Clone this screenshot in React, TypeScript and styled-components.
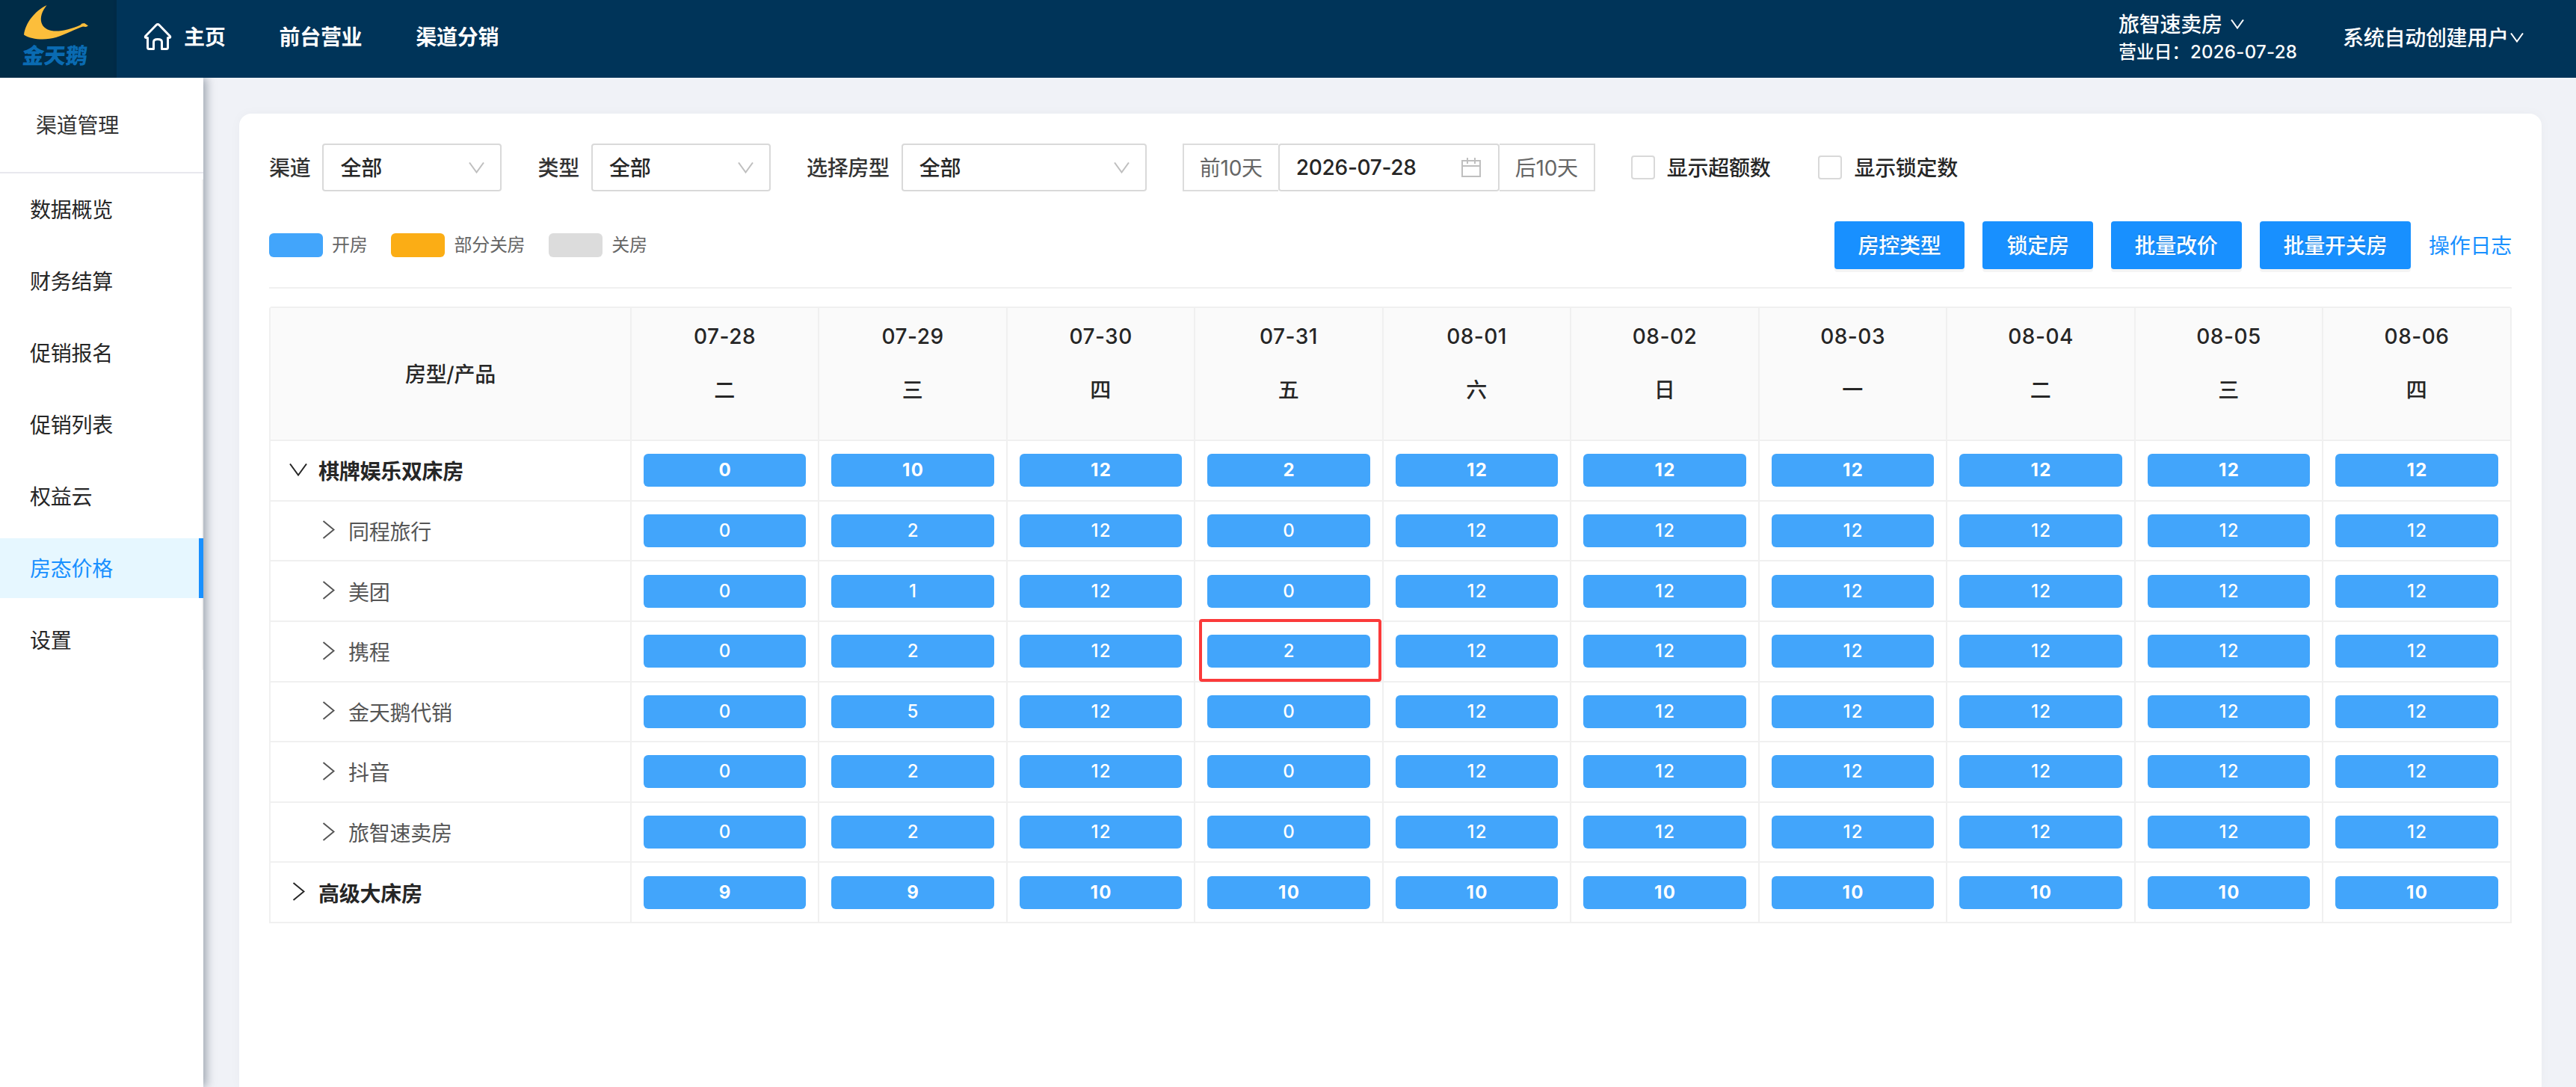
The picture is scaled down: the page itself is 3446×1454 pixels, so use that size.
import React from "react";
import styled, { createGlobalStyle, css } from "styled-components";

const GlobalStyle = createGlobalStyle`
  *, *::before, *::after { box-sizing: border-box; }
  html, body, #root { height: 100%; }
  body {
    margin: 0;
    overflow: hidden;
    background: #f0f2f7;
    color: #262626;
    font-family: Inter, "Noto Sans CJK SC", sans-serif;
    font-size: 28px;
    line-height: 44px;
    letter-spacing: -0.28px;
  }
`;

const Page = styled.div`
  display: flex;
  flex-direction: column;
  height: 1454px;
  overflow: hidden;
`;

const Label = styled.span`
  padding-top: 2px;
  white-space: nowrap;
`;

/* ---------- top bar ---------- */

const TopBar = styled.header`
  display: flex;
  flex: none;
  height: 104px;
  background: #003459;
  color: #fff;
`;

const Brand = styled.div`
  flex: none;
  width: 156px;
  height: 104px;
  background: #002c47;
  border-right: 4px solid #002a46;
  padding-top: 4px;
`;

const BrandMark = styled.svg`
  display: block;
  margin-left: 30px;
  width: 90px;
  height: 50px;
`;

const BrandName = styled.div`
  width: 90px;
  margin: 4px 0 0 30px;
  color: #0a6bb2;
  font-size: 29px;
  font-weight: 900;
  letter-spacing: 0;
  line-height: 34px;
  white-space: nowrap;
  transform: skewX(-6deg);
`;

const Nav = styled.nav`
  display: flex;
  align-items: center;
  flex: 1;
  gap: 72px;
  padding: 0 0 6px 36px;
`;

const NavItem = styled.a`
  display: flex;
  align-items: center;
  gap: 16px;
  font-weight: 700;
`;

const Shop = styled.div`
  display: flex;
  flex-direction: column;
  width: 300px;
  padding-top: 10px;
  font-weight: 500;
`;

const ShopName = styled.div`
  display: flex;
  align-items: center;
  gap: 11px;
  height: 44px;
`;

const BusinessDay = styled.div`
  display: flex;
  font-size: 24px;
  line-height: 32px;
`;

const BusinessDate = styled.span`
  margin-left: 1px;
  font-size: 24px;
  letter-spacing: 0.3px;
`;

const User = styled.div`
  display: flex;
  align-items: center;
  gap: 2px;
  width: 312px;
  padding-bottom: 4px;
  font-weight: 500;
`;

/* ---------- side menu ---------- */

const Body = styled.div`
  display: flex;
  flex: 1;
  min-height: 0;
`;

const Side = styled.aside`
  flex: none;
  width: 272px;
  background: #fff;
  box-shadow: 4px 0 12px rgba(0, 21, 41, 0.35);
  clip-path: inset(0 -40px 0 0);
`;

const SideTitle = styled.div`
  display: flex;
  align-items: center;
  height: 128px;
  padding: 2px 0 0 48px;
  border-bottom: 2px solid #e8e8ee;
  color: #333;
`;

const Menu = styled.ul`
  margin: 0;
  padding: 0;
  list-style: none;
  border-right: 2px solid #f0f0f0;
`;

const MenuItem = styled.li<{ $active?: boolean }>`
  display: flex;
  align-items: center;
  height: 80px;
  margin: 8px -2px 16px 0;
  padding: 2px 0 0 40px;
  ${(p) =>
    p.$active &&
    css`
      color: #1890ff;
      background: #e6f7ff;
      border-right: 6px solid #1890ff;
    `}
  &:last-child { margin-bottom: 8px; }
  & + & { margin-top: 0; }
`;

/* ---------- content ---------- */

const Main = styled.main`
  display: flex;
  flex-direction: column;
  flex: 1;
  min-width: 0;
  padding: 48px 46px 0 48px;
`;

const Card = styled.section`
  flex: 1;
  padding: 40px 40px 0;
  border-radius: 16px 16px 0 0;
  background: #fff;
  box-shadow: 0 0 16px rgba(0, 0, 0, 0.03);
`;

const Filters = styled.div`
  display: flex;
  align-items: center;
  height: 64px;
`;

const Field = styled.label`
  display: flex;
  align-items: center;
  gap: 16px;
  margin-right: 48px;
  color: #333;
  font-weight: 500;
`;

const SelectBox = styled.div<{ $width: number }>`
  display: flex;
  align-items: center;
  justify-content: space-between;
  width: ${(p) => p.$width}px;
  height: 64px;
  padding: 0 21px 0 22px;
  border: 2px solid #d9d9d9;
  border-radius: 4px;
  color: #262626;
`;

const DateGroup = styled.div`
  display: flex;
  margin-right: 48px;
`;

const DateStep = styled.button<{ $side: "left" | "right" }>`
  width: 128px;
  height: 64px;
  padding: 2px 0 0;
  border: 2px solid #dcdcdc;
  border-${(p) => (p.$side === "left" ? "right" : "left")}: 0;
  background: #fff;
  color: #666;
  font: inherit;
  letter-spacing: inherit;
`;

const DateBox = styled.div`
  display: flex;
  align-items: center;
  justify-content: space-between;
  width: 296px;
  height: 64px;
  padding: 0 23px 0 22px;
  border: 2px solid #d9d9d9;
  border-radius: 4px;
  font-weight: 500;
`;

const CheckLabel = styled.label`
  display: flex;
  align-items: center;
  gap: 16px;
  margin-right: 64px;
  font-weight: 500;
`;

const CheckBox = styled.span`
  width: 32px;
  height: 32px;
  border: 2px solid #d9d9d9;
  border-radius: 4px;
`;

const Tools = styled.div`
  display: flex;
  align-items: center;
  justify-content: space-between;
  height: 130px;
  padding-bottom: 16px;
  padding-top: 32px;
  border-bottom: 2px solid #f0f0f0;
`;

const Legend = styled.div`
  display: flex;
  align-items: center;
  gap: 32px;
  color: #666;
  font-size: 24px;
`;

const LegendItem = styled.div`
  display: flex;
  align-items: center;
  gap: 12px;
`;

const Swatch = styled.span<{ $color: string }>`
  width: 72px;
  height: 32px;
  border-radius: 6px;
  background: ${(p) => p.$color};
`;

const Actions = styled.div`
  display: flex;
  align-items: center;
  gap: 24px;
`;

const ActionButton = styled.button`
  height: 64px;
  padding: 2px 32px 0;
  border: 0;
  border-radius: 4px;
  background: #1890ff;
  box-shadow: 0 4px 0 rgba(0, 0, 0, 0.045);
  color: #fff;
  font: inherit;
  font-weight: 500;
  letter-spacing: inherit;
  text-shadow: 0 -2px 0 rgba(0, 0, 0, 0.12);
`;

const LogLink = styled.a`
  padding-top: 2px;
  color: #1890ff;
`;

/* ---------- table ---------- */

const Table = styled.div`
  margin-top: 24px;
  border: 2px solid #f0f0f0;
  border-right: 0;
  border-bottom: 0;
  border-radius: 4px 4px 0 0;
`;

const rowGrid = css`
  display: grid;
  grid-template-columns: 482.8px repeat(10, 251.5px);
`;

const HeadRow = styled.div`
  ${rowGrid}
  height: 178px;
  background: #fafafa;
  font-weight: 500;
`;

const HeadCell = styled.div`
  display: flex;
  flex-direction: column;
  align-items: center;
  justify-content: center;
  padding-top: 2px;
  border-right: 2px solid #f0f0f0;
  border-bottom: 2px solid #f0f0f0;
`;

const DayCell = styled(HeadCell)`
  gap: 28px;
  padding: 0 0 28px;
  letter-spacing: 0.5px;
`;

const Row = styled.div<{ $strong?: boolean }>`
  ${rowGrid}
  height: 80.625px;
  font-weight: ${(p) => (p.$strong ? 700 : 400)};
`;

const NameCell = styled.div<{ $depth: number }>`
  display: flex;
  align-items: center;
  gap: 14px;
  padding: 2px 0 0 ${(p) => 24 + p.$depth * 40}px;
  border-right: 2px solid #f0f0f0;
  border-bottom: 2px solid #f0f0f0;
  color: ${(p) => (p.$depth ? "#555" : "#262626")};
`;

const ArrowSlot = styled.span`
  display: flex;
  justify-content: center;
  width: 26px;
  margin-top: -4px;
`;

const StockCell = styled.div`
  position: relative;
  display: flex;
  align-items: center;
  padding: 0 16px;
  border-right: 2px solid #f0f0f0;
  border-bottom: 2px solid #f0f0f0;
`;

const Pill = styled.div<{ $strong?: boolean }>`
  flex: 1;
  height: 44px;
  border-radius: 6px;
  background: #42a5fb;
  color: #fff;
  font-size: 24px;
  font-weight: ${(p) => (p.$strong ? 700 : 500)};
  line-height: 43px;
  text-align: center;
  text-indent: 1.4px;
  letter-spacing: 1.4px;
`;

const Highlight = styled.div`
  position: absolute;
  z-index: 1;
  top: -4px;
  left: 4.7px;
  width: 244px;
  height: 84px;
  border: 4px solid #fb3a3a;
  border-radius: 4px;
`;

/* ---------- icons ---------- */

const Icon = styled.svg`
  display: block;
  flex: none;
  fill: none;
  stroke: currentColor;
`;

const Chevron = ({ w, h, color, sw = 2 }: { w: number; h: number; color?: string; sw?: number }) => (
  <Icon width={w} height={h} viewBox={`0 0 ${w} ${h}`} color={color} strokeWidth={sw}>
    <path d={`M1 0.5 L${w / 2} ${h - 1.5} L${w - 1} 0.5`} />
  </Icon>
);

const ChevronRight = () => (
  <Icon width={17} height={25} viewBox="0 0 17 25" strokeWidth={2}>
    <path d="M1.5 1 L15.5 12.5 L1.5 24" />
  </Icon>
);

const HomeIcon = () => (
  <Icon width={38} height={38} viewBox="0 0 38 38" strokeWidth={3} strokeLinejoin="round" strokeLinecap="round">
    <path d="M19 2.5 Q20 2.5 21 3.5 L35.5 18.5 Q36.5 20.5 34 20.5 L32.5 20.5 L32.5 33.5 Q32.5 35.5 30.5 35.5 L24.5 35.5 L24.5 26 Q24.5 22.5 19 22.5 Q13.5 22.5 13.5 26 L13.5 35.5 L7.5 35.5 Q5.5 35.5 5.5 33.5 L5.5 20.5 L4 20.5 Q1.5 20.5 2.5 18.5 L17 3.5 Q18 2.5 19 2.5 Z" />
  </Icon>
);

const CalendarIcon = () => (
  <Icon width={26} height={26} viewBox="0 0 26 26" color="#bfbfbf" strokeWidth={2}>
    <path d="M1 4 H25 V25 H1 Z M1 11 H25 M8 0 V8 M18 0 V8" />
  </Icon>
);

/* ---------- data ---------- */

const menu = ["数据概览", "财务结算", "促销报名", "促销列表", "权益云", "房态价格", "设置"];

const days: [string, string][] = [
  ["07-28", "二"], ["07-29", "三"], ["07-30", "四"], ["07-31", "五"], ["08-01", "六"],
  ["08-02", "日"], ["08-03", "一"], ["08-04", "二"], ["08-05", "三"], ["08-06", "四"],
];

type RoomRow = { name: string; depth: number; open?: boolean; stock: number[]; marked?: number };

const tail = (n: number) => Array<number>(6).fill(n);

const rows: RoomRow[] = [
  { name: "棋牌娱乐双床房", depth: 0, open: true, stock: [0, 10, 12, 2, ...tail(12)] },
  { name: "同程旅行", depth: 1, stock: [0, 2, 12, 0, ...tail(12)] },
  { name: "美团", depth: 1, stock: [0, 1, 12, 0, ...tail(12)] },
  { name: "携程", depth: 1, stock: [0, 2, 12, 2, ...tail(12)], marked: 3 },
  { name: "金天鹅代销", depth: 1, stock: [0, 5, 12, 0, ...tail(12)] },
  { name: "抖音", depth: 1, stock: [0, 2, 12, 0, ...tail(12)] },
  { name: "旅智速卖房", depth: 1, stock: [0, 2, 12, 0, ...tail(12)] },
  { name: "高级大床房", depth: 0, stock: [9, 9, 10, 10, ...tail(10)] },
];

const Select = ({ width }: { width: number }) => (
  <SelectBox $width={width}>
    <Label>全部</Label>
    <Chevron w={21} h={15} color="#bfbfbf" />
  </SelectBox>
);

export default function App() {
  return (
    <Page>
      <GlobalStyle />
      <TopBar>
        <Brand>
          <BrandMark viewBox="30 4 90 50">
            <path
              fill="#fcbe3b"
              d="M62.500 7 C46 15 34 31 32 46.500 C42 53.500 62 54 75 50 C89 45.500 101 38.500 111 35.500 L115 36 L118 34.500 L113 31 L109.500 31.500 L107.500 33.500 C96 38.500 84 42 72 41.500 C54 40 49 24 62.500 7 Z"
            />
          </BrandMark>
          <BrandName>金天鹅</BrandName>
        </Brand>
        <Nav>
          <NavItem>
            <HomeIcon />
            <Label>主页</Label>
          </NavItem>
          <NavItem><Label>前台营业</Label></NavItem>
          <NavItem><Label>渠道分销</Label></NavItem>
        </Nav>
        <Shop>
          <ShopName>
            <Label>旅智速卖房</Label>
            <Chevron w={18} h={13} />
          </ShopName>
          <BusinessDay>
            营业日：<BusinessDate>2026-07-28</BusinessDate>
          </BusinessDay>
        </Shop>
        <User>
          <Label>系统自动创建用户</Label>
          <Chevron w={18} h={13} />
        </User>
      </TopBar>
      <Body>
        <Side>
          <SideTitle>渠道管理</SideTitle>
          <Menu>
            {menu.map((m) => (
              <MenuItem key={m} $active={m === "房态价格"}>{m}</MenuItem>
            ))}
          </Menu>
        </Side>
        <Main>
          <Card>
            <Filters>
              <Field><Label>渠道</Label><Select width={240} /></Field>
              <Field><Label>类型</Label><Select width={240} /></Field>
              <Field><Label>选择房型</Label><Select width={328} /></Field>
              <DateGroup>
                <DateStep $side="left">前10天</DateStep>
                <DateBox>
                  2026-07-28
                  <CalendarIcon />
                </DateBox>
                <DateStep $side="right">后10天</DateStep>
              </DateGroup>
              <CheckLabel><CheckBox /><Label>显示超额数</Label></CheckLabel>
              <CheckLabel><CheckBox /><Label>显示锁定数</Label></CheckLabel>
            </Filters>
            <Tools>
              <Legend>
                <LegendItem><Swatch $color="#42a5fb" />开房</LegendItem>
                <LegendItem><Swatch $color="#fbad15" />部分关房</LegendItem>
                <LegendItem><Swatch $color="#dcdcdc" />关房</LegendItem>
              </Legend>
              <Actions>
                <ActionButton>房控类型</ActionButton>
                <ActionButton>锁定房</ActionButton>
                <ActionButton>批量改价</ActionButton>
                <ActionButton>批量开关房</ActionButton>
                <LogLink>操作日志</LogLink>
              </Actions>
            </Tools>
            <Table>
              <HeadRow>
                <HeadCell>房型/产品</HeadCell>
                {days.map(([date, week]) => (
                  <DayCell key={date}>
                    <span>{date}</span>
                    <span>{week}</span>
                  </DayCell>
                ))}
              </HeadRow>
              {rows.map((r) => (
                <Row key={r.name} $strong={r.depth === 0}>
                  <NameCell $depth={r.depth}>
                    <ArrowSlot>{r.open ? <Chevron w={24} h={17} /> : <ChevronRight />}</ArrowSlot>
                    <Label>{r.name}</Label>
                  </NameCell>
                  {r.stock.map((n, i) => (
                    <StockCell key={i}>
                      <Pill $strong={r.depth === 0}>{n}</Pill>
                      {r.marked === i && <Highlight />}
                    </StockCell>
                  ))}
                </Row>
              ))}
            </Table>
          </Card>
        </Main>
      </Body>
    </Page>
  );
}
